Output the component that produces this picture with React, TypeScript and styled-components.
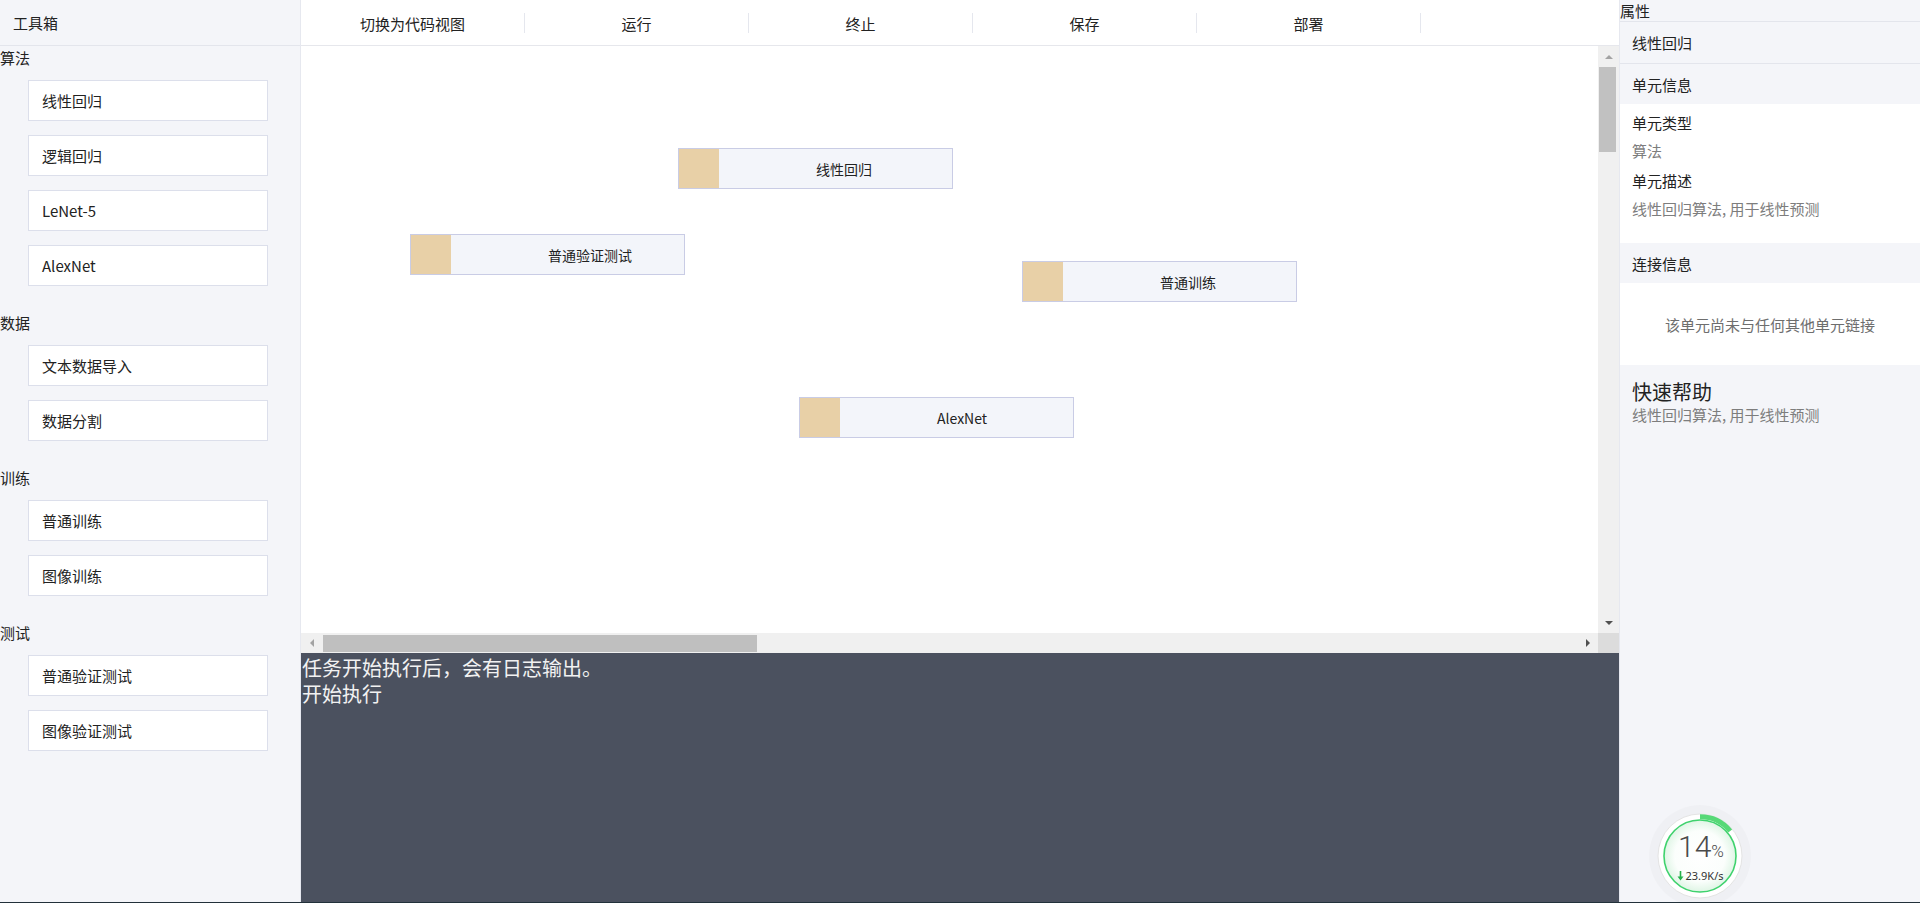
import React from "react";
import styled, { createGlobalStyle } from "styled-components";

const GlobalStyle = createGlobalStyle`
  html, body {
    margin: 0;
    padding: 0;
    background: #22313a;
    overflow: hidden;
  }
  body {
    font-family: "Noto Sans CJK SC", "Noto Sans", "Liberation Sans", sans-serif;
    color: #222;
  }
  * { box-sizing: border-box; }
`;

const Page = styled.div`
  position: relative;
  display: flex;
  width: 1920px;
  height: 902px;
  background: #fff;
`;

/* ---------- Left toolbox ---------- */
const Sidebar = styled.aside`
  width: 301px;
  flex: none;
  background: #f4f5f9;
  border-right: 1px solid #e6e8ef;
  display: flex;
  flex-direction: column;
`;

const SidebarHeader = styled.div`
  height: 46px;
  line-height: 45px;
  padding-left: 13px;
  font-size: 15px;
  border-bottom: 1px solid #e3e5ec;
`;

const GroupList = styled.div`
  padding-top: 1px;
`;

const Group = styled.section`
  display: flex;
  flex-direction: column;
  padding-bottom: 12px;
`;

const GroupTitle = styled.div`
  height: 22px;
  line-height: 22px;
  font-size: 15px;
  margin-bottom: 11px;
`;

const ToolItem = styled.div`
  width: 240px;
  height: 41px;
  margin: 0 0 14px 28px;
  padding-left: 13px;
  display: flex;
  align-items: center;
  background: #fff;
  border: 1px solid #dcdfeb;
  font-size: 15px;
  color: #222;
`;

/* ---------- Center ---------- */
const Main = styled.main`
  width: 1318px;
  flex: none;
  display: flex;
  flex-direction: column;
`;

const Toolbar = styled.div`
  height: 46px;
  flex: none;
  display: flex;
  align-items: center;
  border-bottom: 1px solid #e6e7ec;
  background: #fff;
`;

const ToolButton = styled.button`
  width: 223px;
  height: 45px;
  border: none;
  background: transparent;
  font-family: inherit;
  font-size: 15px;
  color: #222;
  padding: 0;
  padding-top: 2px;
  cursor: pointer;
`;

const ToolDivider = styled.span`
  width: 1px;
  height: 20px;
  background: #e5e7ee;
`;

const CanvasFrame = styled.div`
  height: 607px;
  flex: none;
  display: grid;
  grid-template-columns: 1fr 21px;
  grid-template-rows: 1fr 20px;
`;

const Canvas = styled.div`
  position: relative;
  overflow: hidden;
  background: #fff;
`;

const Node = styled.div.attrs<{ $x: number; $y: number }>((p) => ({
  style: { left: p.$x, top: p.$y },
}))<{ $x: number; $y: number }>`
  position: absolute;
  width: 275px;
  height: 41px;
  display: flex;
  border: 1px solid #c9cce5;
  background: #f3f5fa;
`;

const NodeSwatch = styled.div`
  width: 40px;
  flex: none;
  background: #e8d0a7;
`;

const NodeLabel = styled.div`
  padding-left: 97px;
  display: flex;
  align-items: center;
  font-size: 14px;
  color: #222;
`;

const VScroll = styled.div`
  background: #f0f0f0;
  display: flex;
  flex-direction: column;
  align-items: center;
`;

const HScroll = styled.div`
  background: #f0f0f0;
  display: flex;
  align-items: center;
`;

const Corner = styled.div`
  background: #dcdcdc;
`;

const ArrowBox = styled.div<{ $w: number; $h: number }>`
  width: ${(p) => p.$w}px;
  height: ${(p) => p.$h}px;
  flex: none;
  display: flex;
  align-items: center;
  justify-content: center;
`;

const Tri = styled.span<{ $dir: "up" | "down" | "left" | "right"; $color: string }>`
  width: 0;
  height: 0;
  border-style: solid;
  ${(p) =>
    p.$dir === "up"
      ? `border-width: 0 4px 4px 4px; border-color: transparent transparent ${p.$color} transparent;`
      : p.$dir === "down"
      ? `border-width: 4px 4px 0 4px; border-color: ${p.$color} transparent transparent transparent;`
      : p.$dir === "left"
      ? `border-width: 4px 4px 4px 0; border-color: transparent ${p.$color} transparent transparent;`
      : `border-width: 4px 0 4px 4px; border-color: transparent transparent transparent ${p.$color};`}
`;

const VThumb = styled.div`
  width: 17px;
  height: 85px;
  margin-left: -2px;
  background: #c1c1c1;
`;

const VSpacer = styled.div`
  flex: 1;
`;

const HThumb = styled.div`
  width: 434px;
  height: 17px;
  margin-top: 1px;
  margin-left: 1px;
  background: #bfbfbf;
`;

const HSpacer = styled.div`
  flex: 1;
`;

const LogPanel = styled.div`
  flex: 1;
  background: #4b515f;
  color: #f2f2f2;
  font-size: 20px;
  line-height: 26px;
  padding: 2px 1px;
`;

const LogLine = styled.div``;

/* ---------- Right inspector ---------- */
const Inspector = styled.aside`
  width: 301px;
  flex: none;
  background: #f4f5f9;
  border-left: 1px solid #e6e8ef;
  display: flex;
  flex-direction: column;
`;

const InspectorTitle = styled.div`
  height: 22px;
  line-height: 22px;
  font-size: 15px;
  padding-left: 0;
  border-bottom: 1px solid #e3e5ec;
`;

const SelectedName = styled.div`
  height: 42px;
  display: flex;
  align-items: center;
  padding-left: 12px;
  font-size: 15px;
  border-bottom: 1px solid #e3e5ec;
`;

const SectionHeader = styled.div`
  height: 40px;
  display: flex;
  align-items: center;
  padding-left: 12px;
  font-size: 15px;
  color: #222;
`;

const SectionBody = styled.div`
  background: #fff;
  padding: 9px 12px 24px;
`;

const FieldLabel = styled.div`
  font-size: 15px;
  line-height: 20px;
  color: #222;
  margin-bottom: 8px;
`;

const FieldValue = styled.div`
  font-size: 15px;
  line-height: 20px;
  color: #7d7d7d;
  margin-bottom: 10px;
  &:last-child { margin-bottom: 0; }
`;

const EmptyBody = styled.div`
  background: #fff;
  height: 82px;
  display: flex;
  align-items: center;
  justify-content: center;
  font-size: 15px;
  color: #6e6e6e;
`;

const HelpBlock = styled.div`
  padding: 14px 12px 0;
`;

const HelpTitle = styled.div`
  font-size: 20px;
  line-height: 26px;
  color: #222;
`;

const HelpText = styled.div`
  font-size: 15px;
  line-height: 20px;
  color: #7d7d7d;
`;

/* ---------- Speed ball (floating overlay) ---------- */
const SpeedBall = styled.div`
  position: absolute;
  left: 1648px;
  top: 804px;
  width: 104px;
  height: 104px;
`;

const BallText = styled.div`
  position: absolute;
  inset: 0;
  display: flex;
  flex-direction: column;
  align-items: center;
  justify-content: center;
  padding-top: 2px;
`;

const Percent = styled.div`
  font-family: Roboto, "Open Sans", sans-serif;
  font-weight: 300;
  font-size: 30px;
  line-height: 30px;
  color: #4a4a4a;
  margin-left: 2px;
`;

const PercentSign = styled.span`
  font-size: 17px;
`;

const Speed = styled.div`
  display: flex;
  align-items: center;
  gap: 2px;
  margin-top: 3px;
  font-family: "Noto Sans", "Liberation Sans", sans-serif;
  font-size: 11px;
  line-height: 13px;
  color: #333;
`;

const BottomEdge = styled.div`
  height: 1px;
  background: #22313a;
`;

const groups = [
  { title: "算法", items: ["线性回归", "逻辑回归", "LeNet-5", "AlexNet"] },
  { title: "数据", items: ["文本数据导入", "数据分割"] },
  { title: "训练", items: ["普通训练", "图像训练"] },
  { title: "测试", items: ["普通验证测试", "图像验证测试"] },
];

const actions = ["切换为代码视图", "运行", "终止", "保存", "部署"];

const nodes = [
  { label: "线性回归", x: 377, y: 102 },
  { label: "普通验证测试", x: 109, y: 188 },
  { label: "普通训练", x: 721, y: 215 },
  { label: "AlexNet", x: 498, y: 351 },
];

export default function App() {
  return (
    <>
      <GlobalStyle />
      <Page>
        <Sidebar>
          <SidebarHeader>工具箱</SidebarHeader>
          <GroupList>
            {groups.map((g) => (
              <Group key={g.title}>
                <GroupTitle>{g.title}</GroupTitle>
                {g.items.map((it) => (
                  <ToolItem key={it}>{it}</ToolItem>
                ))}
              </Group>
            ))}
          </GroupList>
        </Sidebar>

        <Main>
          <Toolbar>
            {actions.map((a) => (
              <React.Fragment key={a}>
                <ToolButton>{a}</ToolButton>
                <ToolDivider />
              </React.Fragment>
            ))}
          </Toolbar>
          <CanvasFrame>
            <Canvas>
              {nodes.map((n) => (
                <Node key={n.label} $x={n.x} $y={n.y}>
                  <NodeSwatch />
                  <NodeLabel>{n.label}</NodeLabel>
                </Node>
              ))}
            </Canvas>
            <VScroll>
              <ArrowBox $w={21} $h={21}>
                <Tri $dir="up" $color="#a3a3a3" />
              </ArrowBox>
              <VThumb />
              <VSpacer />
              <ArrowBox $w={21} $h={20}>
                <Tri $dir="down" $color="#505050" />
              </ArrowBox>
            </VScroll>
            <HScroll>
              <ArrowBox $w={21} $h={20}>
                <Tri $dir="left" $color="#a3a3a3" />
              </ArrowBox>
              <HThumb />
              <HSpacer />
              <ArrowBox $w={20} $h={20}>
                <Tri $dir="right" $color="#505050" />
              </ArrowBox>
            </HScroll>
            <Corner />
          </CanvasFrame>
          <LogPanel>
            <LogLine>任务开始执行后，会有日志输出。</LogLine>
            <LogLine>开始执行</LogLine>
          </LogPanel>
        </Main>

        <Inspector>
          <InspectorTitle>属性</InspectorTitle>
          <SelectedName>线性回归</SelectedName>
          <SectionHeader>单元信息</SectionHeader>
          <SectionBody>
            <FieldLabel>单元类型</FieldLabel>
            <FieldValue>算法</FieldValue>
            <FieldLabel>单元描述</FieldLabel>
            <FieldValue>线性回归算法, 用于线性预测</FieldValue>
          </SectionBody>
          <SectionHeader>连接信息</SectionHeader>
          <EmptyBody>该单元尚未与任何其他单元链接</EmptyBody>
          <HelpBlock>
            <HelpTitle>快速帮助</HelpTitle>
            <HelpText>线性回归算法, 用于线性预测</HelpText>
          </HelpBlock>
        </Inspector>

        <SpeedBall>
          <svg width="104" height="104" viewBox="0 0 104 104">
            <defs>
              <radialGradient id="ballFill" cx="50%" cy="50%" r="50%">
                <stop offset="0%" stopColor="#ffffff" />
                <stop offset="70%" stopColor="#fbfefc" />
                <stop offset="100%" stopColor="#dff5e5" />
              </radialGradient>
            </defs>
            <circle cx="52" cy="52" r="51" fill="rgba(0,0,0,0.02)" />
            <circle cx="52" cy="52" r="42" fill="#ffffff" stroke="#e4e4e4" strokeWidth="1" />
            <circle cx="52" cy="52" r="36" fill="url(#ballFill)" stroke="#3fd26d" strokeWidth="1.6" />
            <path
              d="M52 12.8 A39.2 39.2 0 0 1 82.2 27"
              fill="none"
              stroke="#56d977"
              strokeWidth="5"
            />
          </svg>
          <BallText>
            <Percent>
              14<PercentSign>%</PercentSign>
            </Percent>
            <Speed>
              <svg width="7" height="10" viewBox="0 0 7 10">
                <path d="M3.5 0 V8" stroke="#25b14a" strokeWidth="1.6" />
                <path d="M0.5 5.5 L3.5 9.5 L6.5 5.5 Z" fill="#25b14a" />
              </svg>
              23.9K/s
            </Speed>
          </BallText>
        </SpeedBall>
      </Page>
      <BottomEdge />
    </>
  );
}
